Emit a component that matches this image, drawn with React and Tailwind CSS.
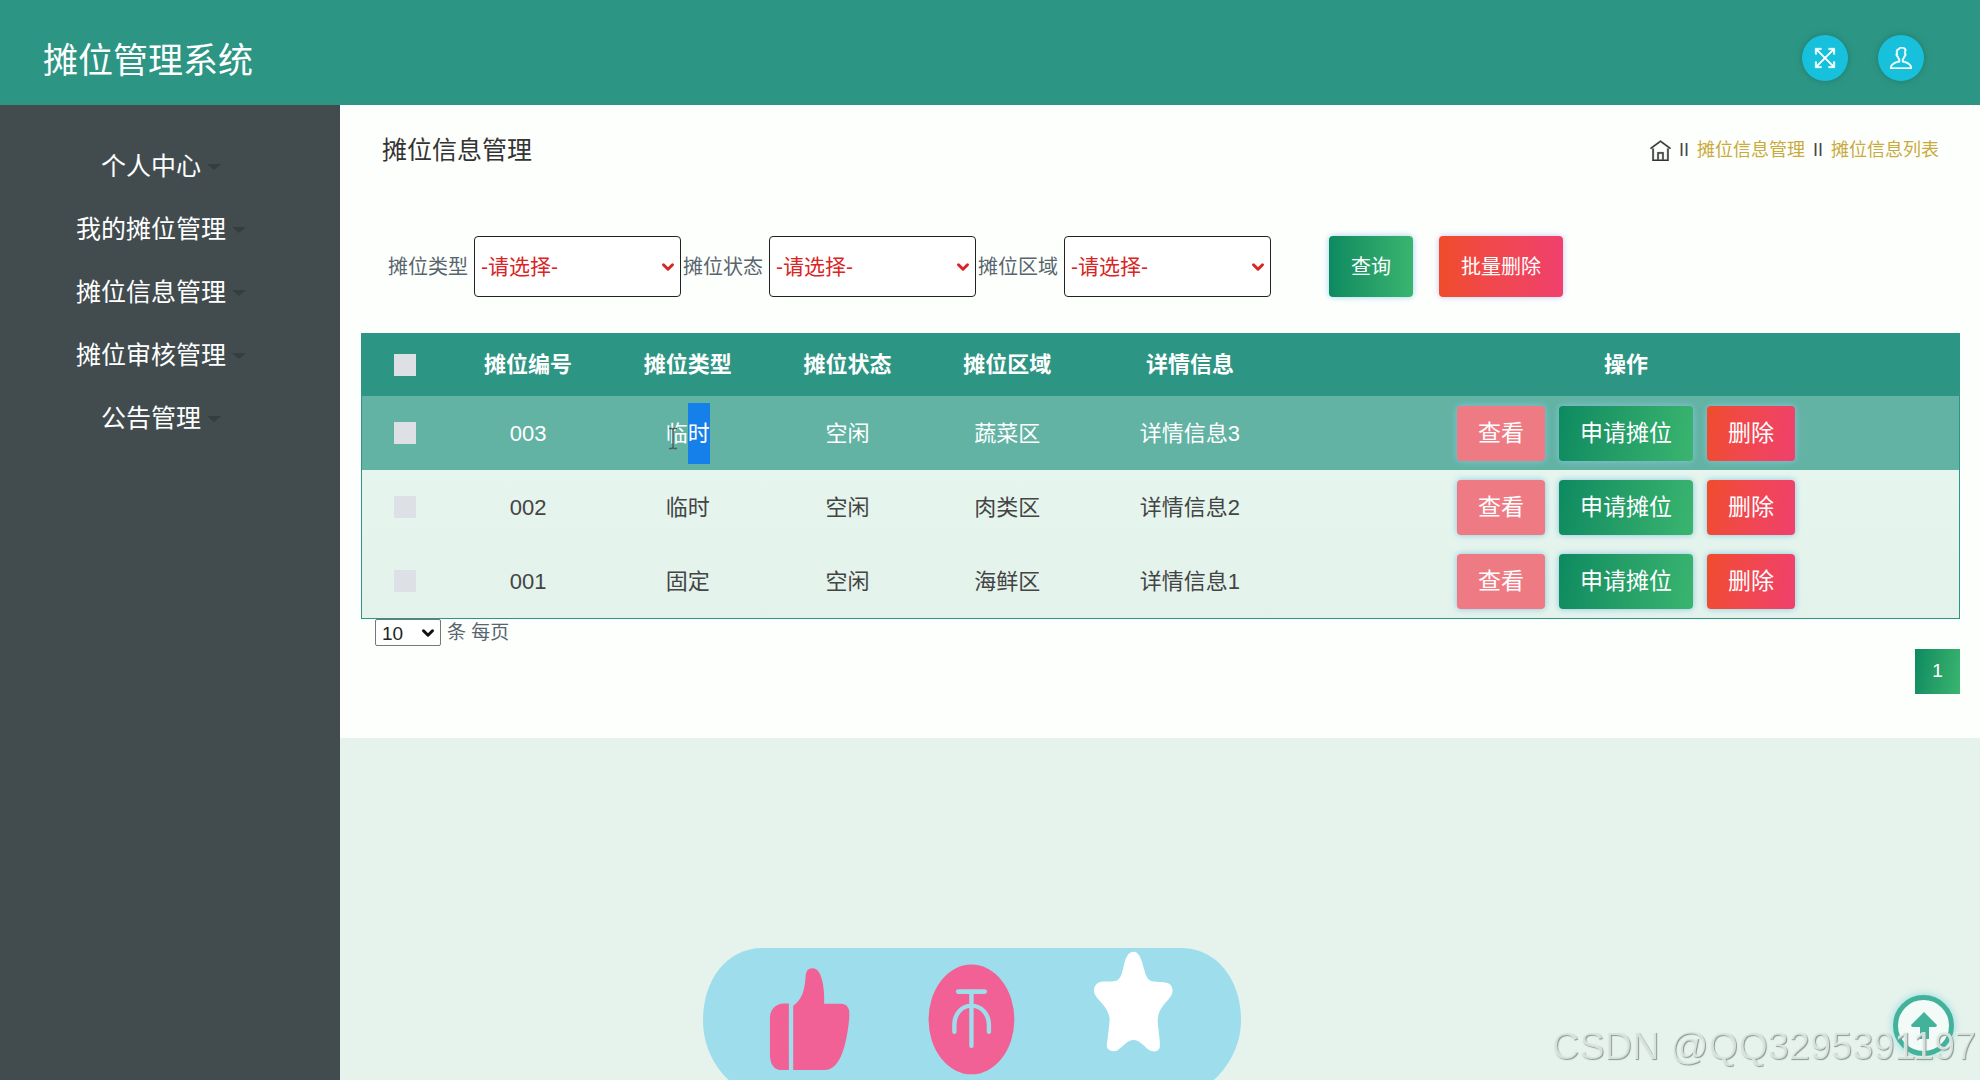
import { useState } from "react";
import { ChevronDown } from "lucide-react";
import { TfiFullscreen, TfiHome, TfiUser } from "react-icons/tfi";

const menuItems = [
  "个人中心",
  "我的摊位管理",
  "摊位信息管理",
  "摊位审核管理",
  "公告管理",
];

const filters = [
  { id: "type", label: "摊位类型", options: ["临时", "固定"] },
  { id: "state", label: "摊位状态", options: ["空闲", "使用中"] },
  { id: "area", label: "摊位区域", options: ["蔬菜区", "肉类区", "海鲜区"] },
];

const stalls = [
  { no: "003", type: "临时", state: "空闲", area: "蔬菜区", detail: "详情信息3" },
  { no: "002", type: "临时", state: "空闲", area: "肉类区", detail: "详情信息2" },
  { no: "001", type: "固定", state: "空闲", area: "海鲜区", detail: "详情信息1" },
];

const Header = () => (
  <header className="flex h-[105px] items-center justify-between bg-[#2d9584] pr-14 pl-[43px]">
    <h1 className="pt-4 text-[35px] leading-10 text-white">摊位管理系统</h1>
    <div className="flex gap-[30px] pt-2.5">
      <button
        type="button"
        aria-label="全屏"
        className="flex size-[46px] items-center justify-center rounded-full bg-[#17c1dc] text-[22px] text-white shadow-[0_0_6px_#1f7a6c]"
      >
        <TfiFullscreen className="stroke-white stroke-[0.5px]" />
      </button>
      <button
        type="button"
        aria-label="用户"
        className="flex size-[46px] items-center justify-center rounded-full bg-[#17c1dc] text-[22px] text-white shadow-[0_0_6px_#1f7a6c]"
      >
        <TfiUser className="stroke-white stroke-[0.5px]" />
      </button>
    </div>
  </header>
);

const Sidebar = () => (
  <nav className="w-[340px] shrink-0 bg-[#424c4f] pt-[30px] pr-[18px]">
    <ul>
      {menuItems.map((item) => (
        <li key={item} className="h-[63px]">
          <a
            href="#"
            className="flex h-[63px] items-center justify-center gap-1.5 text-[25px] text-white"
          >
            {item}
            <span className="border-x-[7px] border-t-[6px] border-x-transparent border-t-[#343d40]" />
          </a>
        </li>
      ))}
    </ul>
  </nav>
);

const Filters = () => (
  <form className="mt-[41px] flex items-center pl-[27px]">
    {filters.map((f) => (
      <div key={f.id} className="mr-0.5 flex items-center">
        <label htmlFor={f.id} className="w-[86px] text-[20px] text-[#58656e]">
          {f.label}
        </label>
        <div className="relative">
          <select
            id={f.id}
            className="block h-[61px] w-[207px] appearance-none rounded border border-[#222] bg-white px-1.5 text-[21px] text-[#d92525]"
          >
            <option>-请选择-</option>
            {f.options.map((o) => (
              <option key={o}>{o}</option>
            ))}
          </select>
          <ChevronDown
            className="pointer-events-none absolute top-[22px] right-1 size-[18px] text-[#d92525]"
            strokeWidth={4}
          />
        </div>
      </div>
    ))}
    <button
      type="button"
      className="ml-14 h-[61px] rounded bg-linear-to-r from-[#0b8a60] to-[#3ab56f] px-[22px] text-[20px] text-white shadow-[0_0_6px_#9bd0ee]"
    >
      查询
    </button>
    <button
      type="button"
      className="ml-[26px] h-[61px] rounded bg-linear-to-r from-[#f04c2a] to-[#f0406c] px-[22px] text-[20px] text-white shadow-[0_0_6px_#c3c6f2]"
    >
      批量删除
    </button>
  </form>
);

// text cursor sitting over the hovered cell
const TextCursor = () => (
  <svg
    className="h-[23px] w-2.5"
    viewBox="0 0 10 23"
    fill="none"
    stroke="#555d5b"
    strokeWidth="1.5"
  >
    <path d="M1 1.5h3l1 1 1-1h3M5 2v19M1 21.500h3l1-1 1 1h3" />
  </svg>
);

const StallRow = ({ stall, active }) => (
  <tr
    className={
      active
        ? "h-[74px] bg-[#62b3a4] text-white"
        : "h-[74px] text-[#444]"
    }
  >
    <td>
      <input
        type="checkbox"
        aria-label={stall.no}
        className="mx-auto block size-[22px] appearance-none bg-[#dde0e5]"
      />
    </td>
    <td>{stall.no}</td>
    <td>
      {active ? (
        <span className="relative inline-block">
          {stall.type[0]}
          <span className="inline-block h-[61px] bg-[#1580ea] leading-[61px]">
            {stall.type[1]}
          </span>
          <span className="absolute top-6 left-0.5 leading-none">
            <TextCursor />
          </span>
        </span>
      ) : (
        stall.type
      )}
    </td>
    <td>{stall.state}</td>
    <td>{stall.area}</td>
    <td>{stall.detail}</td>
    <td>
      <div className="flex justify-center gap-3.5 text-[23px] text-white">
        <button
          type="button"
          className="h-[55px] rounded bg-[#ee7a83] px-[21px] shadow-[0_0_6px_#8cc4dd]"
        >
          查看
        </button>
        <button
          type="button"
          className="h-[55px] rounded bg-linear-100 from-[#0b8a60] to-[#3ab56f] px-[21px] shadow-[0_0_6px_#8cc4dd]"
        >
          申请摊位
        </button>
        <button
          type="button"
          className="h-[55px] rounded bg-linear-100 from-[#f04c2a] to-[#f0406c] px-[21px] shadow-[0_0_6px_#8cc4dd]"
        >
          删除
        </button>
      </div>
    </td>
  </tr>
);

const StallTable = () => (
  <table className="mt-9 w-full table-fixed border-separate border-spacing-0 border border-[#2d9584] bg-linear-to-b from-[#e8f7f0] to-[#e3f3ec] text-center text-[22px]">
    <thead>
      <tr className="h-[62px] bg-[#2d9584] text-white">
        <th className="w-[5.4%]">
          <input
            type="checkbox"
            aria-label="全选"
            className="mx-auto block size-[22px] appearance-none bg-[#dde0e5]"
          />
        </th>
        <th className="w-[10%] pb-0.5">摊位编号</th>
        <th className="w-[10%] pb-0.5">摊位类型</th>
        <th className="w-[10%] pb-0.5">摊位状态</th>
        <th className="w-[10%] pb-0.5">摊位区域</th>
        <th className="w-[12.9%] pb-0.5">详情信息</th>
        <th className="pb-0.5">操作</th>
      </tr>
    </thead>
    <tbody>
      {stalls.map((stall, i) => (
        <StallRow key={stall.no} stall={stall} active={i === 0} />
      ))}
    </tbody>
  </table>
);

const LikeBar = () => (
  <svg
    className="fixed bottom-0 left-[703px] h-[132px] w-[538px]"
    viewBox="36 53 1479 397"
    preserveAspectRatio="none"
  >
    <path
      fill="#9edeec"
      d="M200 53H1350C1450 53 1515 150 1515 270C1515 340 1485 405 1440 450H107C62 405 36 340 36 270C36 150 100 53 200 53Z"
    />
    <g fill="#f26196">
      <path d="M272 220H258C235 220 220 240 220 262V375C220 400 230 420 250 420H272Z" />
      <path d="M284 420H370C415 420 428 340 434 300C437 280 439 262 438 245C437 230 428 221 415 221H369C370 195 368 165 362 145C358 128 350 114 337 114C325 114 319 122 318 140C315 180 310 205 284 227Z" />
      <ellipse cx="774" cy="268" rx="118" ry="165" />
    </g>
    <g fill="none" stroke="#9edeec" strokeLinecap="round" strokeWidth="12">
      <path d="M738 184H810" strokeWidth="14" />
      <path d="M774 184V348" />
      <path d="M727 306V285C727 250 748 227 774 227C800 227 822 250 822 285V306" />
    </g>
    <path
      fill="#fff"
      d="M1220 64C1234 64 1241 85 1247 110C1252 132 1256 148 1270 153C1285 156 1300 154 1313 158C1325 163 1330 178 1325 192C1315 215 1287 230 1286 270C1287 300 1293 325 1292 350C1290 365 1275 368 1262 360C1248 348 1235 330 1220 330C1203 330 1190 350 1175 361C1163 367 1148 362 1146 348C1148 320 1153 295 1154 265C1150 230 1122 212 1113 192C1108 175 1113 160 1128 155C1145 152 1160 157 1175 150C1188 143 1190 115 1196 92C1201 75 1208 64 1220 64Z"
    />
  </svg>
);

const App = () => {
  const [pageSize, setPageSize] = useState("10");

  return (
    <div className="flex min-h-screen flex-col bg-[#e6f3ec] font-['Liberation_Sans','Noto_Sans_CJK_SC',sans-serif]">
      <Header />
      <div className="flex flex-1">
        <Sidebar />
        <main className="min-w-0 flex-1">
          <section className="bg-[#fdfffd] pr-5 pb-11 pl-[21px]">
            <div className="flex h-[90px] items-center justify-between px-[21px]">
              <h2 className="pt-0.5 text-[25px] text-[#333]">摊位信息管理</h2>
              <div className="flex items-center gap-2 text-[18px] text-[#c9aa3c]">
                <TfiHome className="stroke-[#333] stroke-[0.4px] text-[21px] text-[#333]" />
                <span className="text-[#444]">II</span>
                <a href="#">摊位信息管理</a>
                <span className="text-[#444]">II</span>
                <a href="#">摊位信息列表</a>
              </div>
            </div>

            <Filters />
            <StallTable />

            <div className="flex items-center pl-3.5 text-[19px] text-[#58656e]">
              <div className="relative mr-1.5">
                <select
                  id="pageSize"
                  className="block h-[27px] w-[66px] appearance-none rounded-xs border border-[#777] bg-white px-1.5 text-[19px] text-[#222]"
                  value={pageSize}
                  onChange={(e) => setPageSize(e.target.value)}
                >
                  <option>10</option>
                  <option>20</option>
                  <option>50</option>
                </select>
                <ChevronDown
                  className="pointer-events-none absolute top-[5px] right-1 size-[18px] text-[#111]"
                  strokeWidth={4}
                />
              </div>
              <label htmlFor="pageSize" className="leading-[27px]">
                条 每页
              </label>
            </div>

            <div className="flex justify-end pt-[3px]">
              <button
                type="button"
                className="size-[45px] bg-linear-100 from-[#0b8a60] to-[#3ab56f] text-[19px] text-white"
              >
                1
              </button>
            </div>
          </section>
        </main>
      </div>

      <LikeBar />

      <button
        type="button"
        aria-label="返回顶部"
        className="fixed right-[26px] bottom-6 flex size-[61px] items-center justify-center rounded-full border-[5px] border-[#42b39a] bg-[#f3fbf8] shadow-[0_0_8px_#8fd8dd]"
      >
        <svg viewBox="0 0 26 28" className="h-7 w-[26px]" fill="#42b39a">
          <path d="M13 0L26 13Q26 15 24 15H18V27H9V15H2Q0 15 0 13Z" />
        </svg>
      </button>

      <p className="pointer-events-none fixed right-1 bottom-3 text-[38px] leading-[44px] text-[#e8f2ee]/80 [text-shadow:1px_1px_1px_#8b9693]">
        CSDN @QQ3295391197
      </p>
    </div>
  );
};

export default App;
